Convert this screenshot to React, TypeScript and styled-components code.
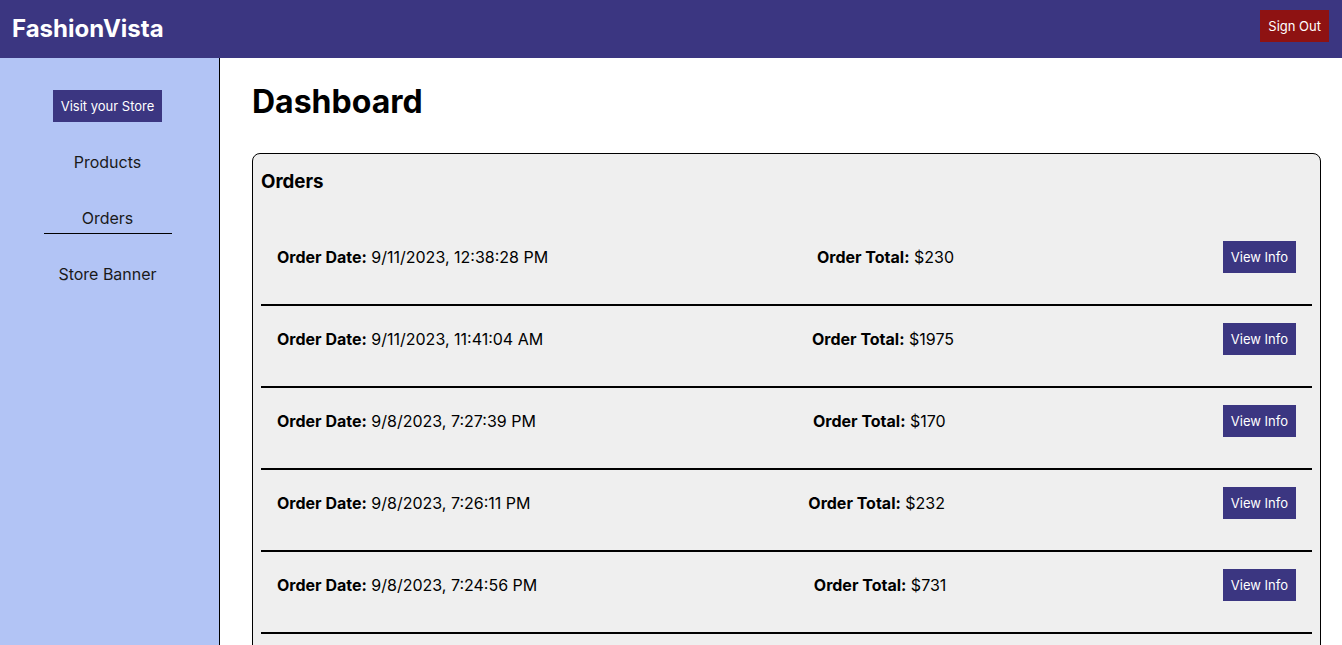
import React from "react";
import styled, { createGlobalStyle } from "styled-components";

const GlobalStyle = createGlobalStyle`
  html, body {
    margin: 0;
    padding: 0;
    overflow: hidden;
  }
  body {
    font-family: Inter, "Noto Sans", sans-serif;
    color: #000;
    background: #fff;
  }
  * { box-sizing: border-box; }
`;

const Header = styled.header`
  height: 58px;
  background: #3b3681;
  display: flex;
  align-items: center;
  justify-content: space-between;
  padding: 0 13px 0 12px;
`;

const Logo = styled.div`
  color: #fff;
  font-size: 24px;
  font-weight: 700;
  line-height: 29px;
  margin-top: -2px;
`;

const Button = styled.button<{ $bg: string }>`
  background: ${(p) => p.$bg};
  color: #fff;
  border: none;
  border-radius: 0;
  height: 32px;
  padding: 0 8px;
  font-family: Inter, "Noto Sans", sans-serif;
  font-size: 13px;
  line-height: 32px;
  cursor: pointer;
`;

const SignOut = styled(Button)`
  margin-bottom: 6px;
`;

const Layout = styled.div`
  display: flex;
  height: calc(100vh - 58px);
`;

const Sidebar = styled.aside`
  width: 220px;
  flex-shrink: 0;
  background: #b2c4f5;
  border-right: 1px solid #000;
  padding: 32px 4px 0 0;
  display: flex;
  flex-direction: column;
  align-items: center;
`;

const NavList = styled.nav`
  margin-top: 26px;
  display: flex;
  flex-direction: column;
  align-items: center;
  gap: 26px;
`;

const NavItem = styled.a<{ $active?: boolean }>`
  width: 128px;
  text-align: center;
  font-size: 16px;
  line-height: 19px;
  padding: 5px 0;
  color: #1a1a1a;
  text-decoration: none;
  border-bottom: 1px solid ${(p) => (p.$active ? "#000" : "transparent")};
`;

const Main = styled.main`
  flex: 1;
  padding: 24px 21px 0 32px;
  overflow: hidden;
`;

const Title = styled.h1`
  margin: 0 0 32px;
  font-size: 32px;
  font-weight: 700;
  line-height: 39px;
`;

const Card = styled.section`
  background: #efefef;
  border: 1px solid #000;
  border-radius: 8px;
  padding: 8px 8px 0;
`;

const CardTitle = styled.h3`
  margin: 8px 0 31px;
  font-size: 18.72px;
  font-weight: 700;
  line-height: 23px;
`;

const Row = styled.div`
  display: flex;
  align-items: center;
  justify-content: space-between;
  padding: 17px 16px 31px;
  border-bottom: 2px solid #000;
  font-size: 16px;
  line-height: 19px;
`;

const Field = styled.span`
  white-space: nowrap;
`;

const Label = styled.b`
  font-weight: 700;
`;

const orders = [
  { date: "9/11/2023, 12:38:28 PM", total: "$230" },
  { date: "9/11/2023, 11:41:04 AM", total: "$1975" },
  { date: "9/8/2023, 7:27:39 PM", total: "$170" },
  { date: "9/8/2023, 7:26:11 PM", total: "$232" },
  { date: "9/8/2023, 7:24:56 PM", total: "$731" },
  { date: "9/8/2023, 7:20:13 PM", total: "$415" },
  { date: "9/8/2023, 7:15:42 PM", total: "$98" },
];

export default function App() {
  return (
    <>
      <GlobalStyle />
      <Header>
        <Logo>FashionVista</Logo>
        <SignOut $bg="#8e1212">Sign Out</SignOut>
      </Header>
      <Layout>
        <Sidebar>
          <Button $bg="#3b3681">Visit your Store</Button>
          <NavList>
            <NavItem>Products</NavItem>
            <NavItem $active>Orders</NavItem>
            <NavItem>Store Banner</NavItem>
          </NavList>
        </Sidebar>
        <Main>
          <Title>Dashboard</Title>
          <Card>
            <CardTitle>Orders</CardTitle>
            {orders.map((o, i) => (
              <Row key={i}>
                <Field>
                  <Label>Order Date:</Label> {o.date}
                </Field>
                <Field>
                  <Label>Order Total:</Label> {o.total}
                </Field>
                <Button $bg="#3b3681">View Info</Button>
              </Row>
            ))}
          </Card>
        </Main>
      </Layout>
    </>
  );
}
